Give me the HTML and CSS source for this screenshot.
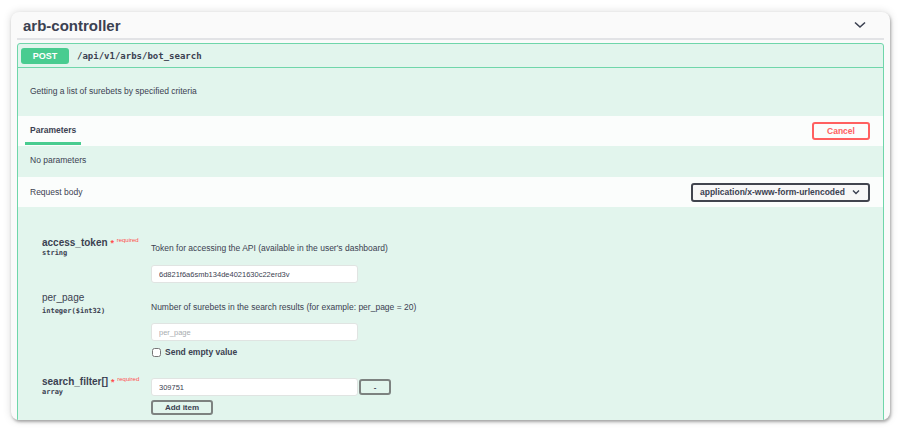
FILE: index.html
```html
<!DOCTYPE html>
<html lang="en">
<head>
    <meta charset="UTF-8">
    <meta name="viewport" content="width=device-width, initial-scale=1.0">
    <title>arb-controller</title>
    <link rel="stylesheet" href="styles.css">
</head>
<body>
    <div class="page">
        <div class="card">
            <!-- Tag header -->
            <div class="tag-header">
                <h3 class="tag-title">arb-controller</h3>
                <svg class="chevron" width="12" height="8" viewBox="0 0 12 8">
                    <path d="M1 1.5 L6 6 L11 1.5" fill="none" stroke="#3b4151" stroke-width="1.6"/>
                </svg>
            </div>

            <!-- Operation block -->
            <div class="opblock">
                <div class="summary">
                    <span class="method">POST</span>
                    <span class="path">/api/v1/arbs/bot_search</span>
                </div>

                <div class="description">Getting a list of surebets by specified criteria</div>

                <div class="section-header">
                    <div class="tab">Parameters</div>
                    <button class="cancel-btn">Cancel</button>
                </div>
                <div class="section-text">No parameters</div>

                <div class="section-header body-header">
                    <div class="section-label">Request body</div>
                    <div class="content-type">
                        application/x-www-form-urlencoded
                        <svg width="8" height="6" viewBox="0 0 8 6">
                            <path d="M1 1.5 L4 4.5 L7 1.5" fill="none" stroke="#3b4151" stroke-width="1.4"/>
                        </svg>
                    </div>
                </div>

                <div class="body-params">
                    <div class="param-row row-token">
                        <div class="param-name">
                            <div class="name">access_token <span class="star">*</span> <sup class="required">required</sup></div>
                            <div class="type">string</div>
                        </div>
                        <div class="param-desc">
                            <div class="desc-text">Token for accessing the API (available in the user's dashboard)</div>
                            <input class="text-input" type="text" value="6d821f6a6smb134de4021630c22erd3v">
                        </div>
                    </div>

                    <div class="param-row row-page">
                        <div class="param-name">
                            <div class="name plain">per_page</div>
                            <div class="type">integer($int32)</div>
                        </div>
                        <div class="param-desc">
                            <div class="desc-text">Number of surebets in the search results (for example: per_page = 20)</div>
                            <input class="text-input" type="text" placeholder="per_page">
                            <label class="empty-value"><input type="checkbox"> Send empty value</label>
                        </div>
                    </div>

                    <div class="param-row row-filter">
                        <div class="param-name">
                            <div class="name">search_filter[] <span class="star">*</span> <sup class="required">required</sup></div>
                            <div class="type">array</div>
                        </div>
                        <div class="param-desc">
                            <div class="array-item">
                                <input class="text-input" type="text" value="309751">
                                <button class="small-btn minus-btn">-</button>
                            </div>
                            <button class="small-btn add-btn">Add item</button>
                        </div>
                    </div>
                </div>
            </div>
        </div>
    </div>
</body>
</html>
```

FILE: styles.css
```css
* {
    margin: 0;
    padding: 0;
    box-sizing: border-box;
    font-family: 'Liberation Sans', Arial, sans-serif;
}

body {
    background-color: #ffffff;
    color: #3b4151;
}

.page {
    padding: 12px 10px 12px 11px;
}

.card {
    height: 408px;
    background-color: #fafafa;
    border-radius: 8px;
    overflow: hidden;
    padding: 0 6px;
    box-shadow: 1px 2px 3px rgba(0, 0, 0, 0.3), 0 0 8px rgba(0, 0, 0, 0.15);
}

/* Tag header */
.tag-header {
    display: flex;
    justify-content: space-between;
    align-items: center;
    height: 28px;
    padding: 0 18px 0 6px;
    border-bottom: 2px solid #e2e3e6;
}

.tag-title {
    font-size: 15px;
    font-weight: bold;
    color: #3b4151;
}

.chevron {
    margin-top: -1px;
}

/* Operation block */
.opblock {
    margin-top: 3px;
    background-color: #e2f5ed;
    border: 1px solid #6fd6aa;
    border-radius: 3px 3px 0 0;
    min-height: 400px;
}

.summary {
    display: flex;
    align-items: center;
    height: 24px;
    padding: 0 3px;
    border-bottom: 1px solid #6fd6aa;
}

.method {
    width: 48px;
    height: 16px;
    line-height: 16px;
    background-color: #49cc90;
    color: #ffffff;
    border-radius: 3px;
    text-align: center;
    font-size: 9px;
    font-weight: bold;
}

.path {
    margin-left: 8px;
    font-family: 'DejaVu Sans Mono', 'Liberation Mono', monospace;
    font-size: 9px;
    font-weight: bold;
    color: #3b4151;
}

.description {
    height: 48px;
    line-height: 46px;
    padding: 0 12px;
    font-size: 8.5px;
}

.section-header {
    display: flex;
    justify-content: space-between;
    align-items: center;
    height: 30px;
    padding: 0 13px 0 7px;
    background-color: #fbfdfc;
}

.tab {
    align-self: stretch;
    width: 56px;
    padding: 9px 0 0 5px;
    font-size: 8.5px;
    font-weight: bold;
    border-bottom: 3px solid #49cc90;
    margin-bottom: 1px;
}

.cancel-btn {
    width: 58px;
    height: 18px;
    background-color: transparent;
    border: 2px solid #ff6060;
    border-radius: 3px;
    color: #ff6060;
    font-size: 8.5px;
    font-weight: bold;
}

.section-text {
    height: 31px;
    line-height: 29px;
    padding: 0 12px;
    font-size: 8.5px;
}

.body-header {
    padding-left: 12px;
}

.section-label {
    font-size: 8.5px;
}

.content-type {
    display: flex;
    justify-content: space-between;
    align-items: center;
    width: 179px;
    height: 19px;
    padding: 0 8px 0 7px;
    background-color: #f7f7f7;
    border: 2px solid #41444e;
    border-radius: 3px;
    font-size: 8.5px;
    font-weight: bold;
}

/* Body parameters */
.body-params {
    padding: 26px 0 0 24px;
}

.param-row {
    display: grid;
    grid-template-columns: 109px 1fr;
    align-items: start;
}

.name {
    height: 14px;
    line-height: 14px;
    font-size: 10px;
    font-weight: bold;
    white-space: nowrap;
}

.name.plain {
    font-weight: normal;
}

.star {
    color: #ff4d4d;
    font-size: 9px;
}

.required {
    color: #ff4d4d;
    font-size: 6px;
    font-weight: normal;
    vertical-align: 4px;
}

.type {
    height: 12px;
    line-height: 12px;
    font-family: 'DejaVu Sans Mono', 'Liberation Mono', monospace;
    font-size: 7px;
    font-weight: bold;
    color: #3b4151;
}

.desc-text {
    height: 14px;
    line-height: 14px;
    font-size: 8.5px;
}

.text-input {
    display: block;
    width: 207px;
    height: 18px;
    padding-left: 7px;
    background-color: #ffffff;
    border: 1px solid #e0e4e2;
    border-radius: 3px;
    font-size: 7.5px;
    color: #3b4151;
}

.text-input::placeholder {
    color: #a9adb0;
}

.row-token .param-desc {
    padding-top: 8px;
}

.row-token .text-input {
    margin-top: 10px;
}

.row-page {
    margin-top: 8px;
}

.row-page .param-desc {
    padding-top: 9px;
}

.row-page .text-input {
    margin-top: 9px;
}

.empty-value {
    display: flex;
    align-items: center;
    gap: 4px;
    height: 14px;
    margin-top: 4px;
    font-size: 8.5px;
    font-weight: bold;
}

.empty-value input {
    width: 9px;
    height: 9px;
    margin-left: 1px;
}

.row-filter {
    margin-top: 13px;
}

.row-filter .param-desc {
    padding-top: 6px;
}

.array-item {
    display: flex;
    align-items: center;
}

.small-btn {
    background-color: transparent;
    border: 2px solid #7d8280;
    border-radius: 3px;
    font-size: 8px;
    font-weight: bold;
    color: #3b4151;
}

.minus-btn {
    width: 32px;
    height: 16px;
    margin-left: 1px;
}

.add-btn {
    display: block;
    width: 62px;
    height: 15px;
    margin-top: 4px;
}
```
